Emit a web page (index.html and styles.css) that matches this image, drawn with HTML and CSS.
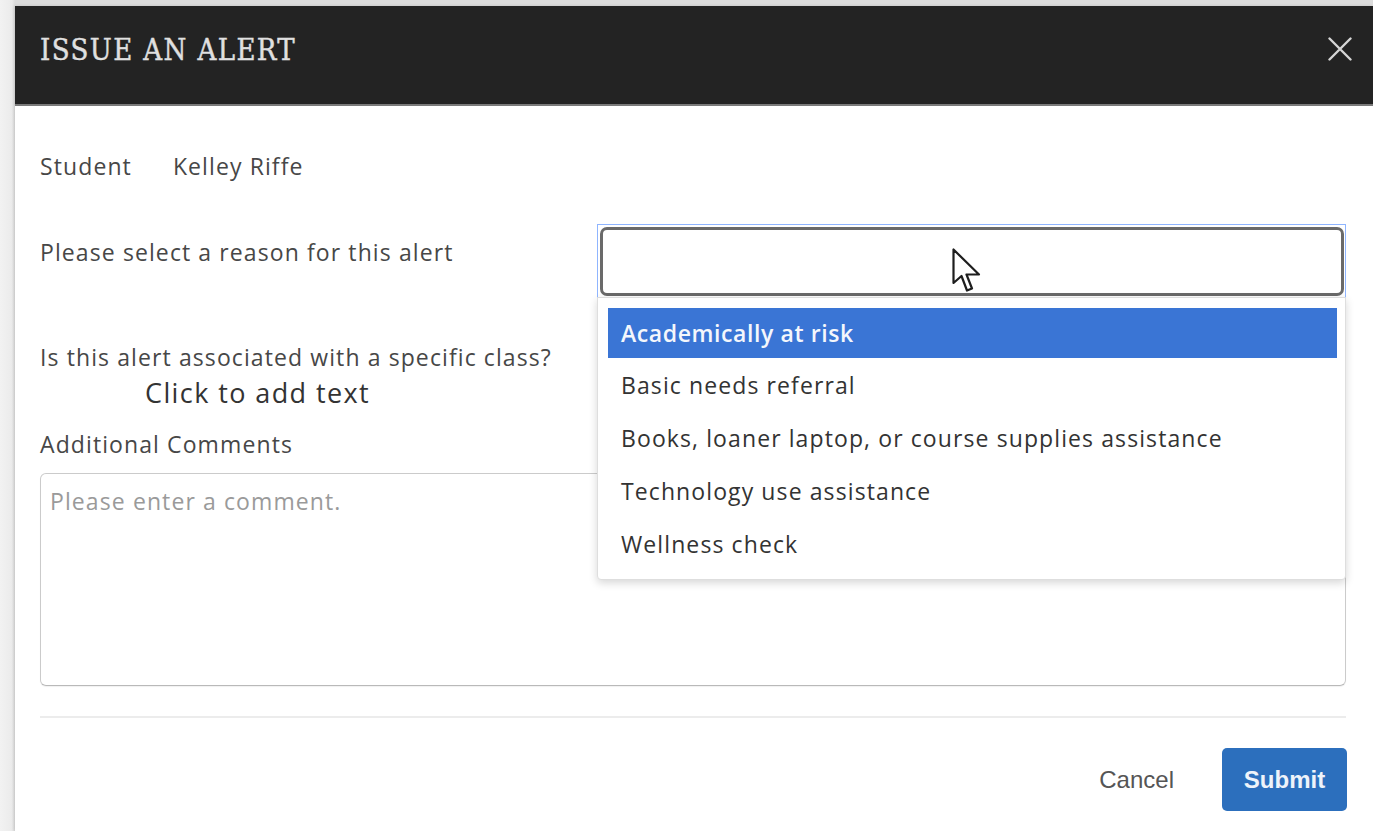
FILE: index.html
```html
<!DOCTYPE html>
<html lang="en">
<head>
<meta charset="utf-8">
<title>Issue an Alert</title>
<link rel="stylesheet" href="styles.css">
</head>
<body>
<div class="backdrop">
  <div class="modal">
    <header class="modal-header">
      <h1 class="modal-title">ISSUE AN ALERT</h1>
      <button class="close-btn" aria-label="Close">
        <svg width="24" height="24" viewBox="0 0 24 24"><path d="M1.5 1.5 L22.5 22.5 M22.5 1.5 L1.5 22.5" stroke="#d6d6d6" stroke-width="2.4" stroke-linecap="round" fill="none"/></svg>
      </button>
    </header>

    <div class="modal-body">
      <div class="student-row">
        <span class="label">Student</span>
        <span class="label">Kelley Riffe</span>
      </div>

      <div class="reason-row">
        <span class="label">Please select a reason for this alert</span>
        <div class="select-wrap">
          <div class="select-focus">
            <div class="select-box"></div>
          </div>
          <ul class="dropdown">
            <li class="option active">Academically at risk</li>
            <li class="option">Basic needs referral</li>
            <li class="option">Books, loaner laptop, or course supplies assistance</li>
            <li class="option">Technology use assistance</li>
            <li class="option">Wellness check</li>
          </ul>
          <svg class="cursor" width="30" height="46" viewBox="0 0 30 46"><path d="M1.5 1.5 L1.5 35 L9.5 28 L15 42.5 L20 40.5 L14.5 26.5 L27 26.5 Z" fill="#fff" stroke="#1e1e1e" stroke-width="2.2" stroke-linejoin="round"/></svg>
        </div>
      </div>

      <p class="label class-q">Is this alert associated with a specific class?</p>
      <p class="placeholder-note">Click to add text</p>

      <p class="label comments-label">Additional Comments</p>
      <div class="comment-box">Please enter a comment.</div>

      <hr class="divider">

      <footer class="modal-footer">
        <button class="btn-cancel">Cancel</button>
        <button class="btn-submit">Submit</button>
      </footer>
    </div>
  </div>
</div>
</body>
</html>
```
FILE: styles.css
```css
* { box-sizing: border-box; }

html, body {
  margin: 0;
  padding: 0;
  height: 100%;
  overflow: hidden;
}

body {
  background: #ededed;
  font-family: "Open Sans", "Noto Sans", sans-serif;
}

.backdrop {
  padding: 6px 0 0 15px;
  height: 100%;
  background: linear-gradient(to right, #f2f2f2 0, #ebebeb 12px, #dcdcdc 15px);
}

.modal {
  background: #fff;
  height: 100%;
  display: flex;
  flex-direction: column;
  box-shadow: -1px 0 3px rgba(0,0,0,0.12);
}

.modal-header {
  height: 100px;
  background: #232323;
  border-bottom: 2px solid #7a7a7a;
  display: flex;
  align-items: center;
  justify-content: space-between;
  padding: 0 21px 0 25px;
  flex: none;
}

.modal-title {
  margin: 0 0 11px;
  font-family: "DejaVu Serif", "Liberation Serif", serif;
  font-stretch: condensed;
  font-weight: normal;
  font-size: 29px;
  letter-spacing: 1.4px;
  color: #e0e0e0;
  -webkit-text-stroke: 0.4px #e0e0e0;
}

.close-btn {
  background: none;
  border: 0;
  padding: 0;
  margin-bottom: 13px;
  width: 24px;
  height: 24px;
  display: flex;
}

.modal-body {
  padding: 0 27px 0 25px;
  position: relative;
}

.label {
  font-size: 23px;
  color: #474747;
  letter-spacing: 1.1px;
  line-height: 24px;
}

.student-row {
  margin-top: 48px;
  display: flex;
  gap: 41px;
}

.reason-row {
  margin-top: 46px;
  display: grid;
  grid-template-columns: 557px 1fr;
  align-items: start;
}

.reason-row .label {
  margin-top: 16px;
}

.select-wrap {
  position: relative;
}

.select-focus {
  border: 1px solid #8fb5ff;
  padding: 2px 1px 1px 2px;
  height: 74px;
}

.select-box {
  height: 100%;
  border: 3px solid #6a6a6a;
  border-radius: 7px;
  background: #fff;
}

.dropdown {
  position: absolute;
  left: 0;
  top: 73px;
  width: 749px;
  margin: 0;
  padding: 10px 8px 9px 10px;
  list-style: none;
  background: #fff;
  border: 1px solid #dedede;
  border-radius: 0 0 4px 4px;
  box-shadow: 0 3px 8px rgba(0,0,0,0.16);
  z-index: 2;
}

.option {
  height: 53px;
  display: flex;
  align-items: center;
  padding-left: 13px;
  font-size: 23px;
  letter-spacing: 1.1px;
  color: #333;
}

.option.active {
  height: 50px;
  background: #3a75d5;
  color: #f4f7fc;
  font-weight: 600;
  letter-spacing: 0.6px;
}

.cursor {
  position: absolute;
  left: 355px;
  top: 24px;
  z-index: 3;
}

.class-q {
  margin: 47px 0 0;
}

.placeholder-note {
  margin: 7px 0 0 105px;
  font-size: 27px;
  letter-spacing: 1.4px;
  line-height: 34px;
  color: #333;
}

.comments-label {
  margin: 22px 0 0;
}

.comment-box {
  margin-top: 17px;
  height: 213px;
  border: 1px solid #cbcbcb;
  border-bottom-color: #b9b9b9;
  border-radius: 6px;
  padding: 15px 9px;
  font-size: 23px;
  letter-spacing: 1.1px;
  color: #9a9a9a;
  line-height: 24px;
  box-shadow: 0 1px 1px rgba(0,0,0,0.06);
}

.divider {
  margin: 30px 0 0;
  border: 0;
  border-top: 2px solid #ececec;
}

.modal-footer {
  margin-top: 30px;
  display: flex;
  justify-content: flex-end;
  align-items: center;
  gap: 48px;
}

.btn-cancel {
  background: none;
  border: 0;
  padding: 0;
  font-family: "Liberation Sans", Arial, sans-serif;
  font-size: 24px;
  color: #555;
}

.btn-submit {
  width: 125px;
  height: 63px;
  border: 0;
  border-radius: 5px;
  background: #2c6fbd;
  font-family: "Liberation Sans", Arial, sans-serif;
  font-weight: bold;
  font-size: 24px;
  color: #eef3fa;
  margin-right: -1px;
}
```
